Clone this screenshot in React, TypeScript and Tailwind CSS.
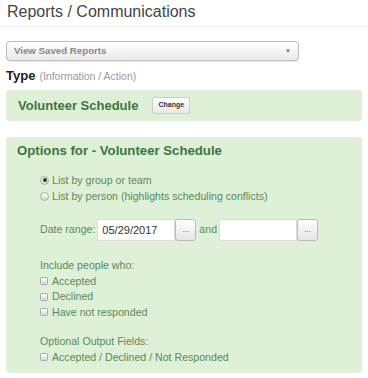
import React from "react";

const Radio = ({ checked }: { checked?: boolean }) => (
  <span className="inline-flex h-[9px] w-[9px] shrink-0 items-center justify-center rounded-full border border-[#a9a9a9] bg-gradient-to-b from-[#fdfdfd] to-[#d8d8d8]">
    {checked && <span className="h-[4px] w-[4px] rounded-full bg-[#333]" />}
  </span>
);

const Check = () => (
  <span className="inline-block h-[8px] w-[8px] shrink-0 rounded-[1.5px] border border-[#a9a9a9] bg-gradient-to-b from-[#fdfdfd] to-[#d8d8d8]" />
);

const Dots = () => (
  <span className="flex h-[22px] w-[21px] items-end justify-center rounded-[3px] border border-[#bbb] bg-gradient-to-b from-white to-[#e6e6e6] pb-[6px] text-[8px] leading-none text-[#444]">
    ...
  </span>
);

export default function App() {
  return (
    <div className="h-[378px] w-[368px] overflow-hidden bg-white font-['Liberation_Sans',Arial,sans-serif] text-[#333]">
      <div className="border-b border-[#eee] px-[7px] pb-[4px] pt-[1px] text-[16px] leading-[21px] text-[#444]">
        Reports / Communications
      </div>
      <div className="px-[6px] pt-[14px]">
        <div className="flex h-[20px] w-[293px] items-center justify-between rounded-[4px] border border-[#bbb] bg-gradient-to-b from-white to-[#eaeaea] pl-[7px] pr-[7px] shadow-[0_1px_1px_rgba(0,0,0,0.08)]">
          <span className="text-[9.7px] font-bold text-[#888]">View Saved Reports</span>
          <span className="text-[6px] text-[#777]">▼</span>
        </div>
        <div className="mt-[6px] flex items-baseline gap-[4px] leading-[18px]">
          <span className="text-[13px] font-bold text-[#222]">Type</span>
          <span className="text-[10.5px] text-[#999]">(Information / Action)</span>
        </div>
        <div className="mt-[5px] flex h-[31px] items-center rounded-[3px] bg-[#dff0d8] pl-[12px]">
          <span className="text-[13px] font-bold text-[#3c763d]">Volunteer Schedule</span>
          <span className="ml-[14px] flex h-[17px] items-center rounded-[2px] border border-[#ccc] bg-gradient-to-b from-white to-[#e8e8e8] px-[5px] text-[7px] font-bold text-[#333]">
            Change
          </span>
        </div>
        <div className="mt-[16px] rounded-[3px] bg-[#dff0d8] pb-[8px] pl-[11px] pt-[4px] text-[10.6px] text-[#5b8a56]">
          <div className="text-[13.2px] font-bold leading-[20px] text-[#3c763d]">
            Options for - Volunteer Schedule
          </div>
          <div className="pl-[23px]">
            <div className="mt-[11px] flex flex-col">
              <label className="flex items-center gap-[3px] leading-[16px]">
                <Radio checked /> List by group or team
              </label>
              <label className="flex items-center gap-[3px] leading-[16px]">
                <Radio /> List by person (highlights scheduling conflicts)
              </label>
            </div>
            <div className="mt-[15px] flex items-center">
              <span>Date range:</span>
              <span className="ml-[2px] flex h-[22px] w-[78px] items-center border border-[#ddd] bg-white pl-[4px] text-[11px] text-[#333]">
                05/29/2017
              </span>
              <Dots />
              <span className="ml-[3px] mr-[2px]">and</span>
              <span className="h-[22px] w-[78px] border border-[#ddd] bg-white" />
              <Dots />
            </div>
            <div className="mt-[17px] flex flex-col leading-[15.5px]">
              <span>Include people who:</span>
              <label className="flex items-center gap-[4px]">
                <Check /> Accepted
              </label>
              <label className="flex items-center gap-[4px]">
                <Check /> Declined
              </label>
              <label className="flex items-center gap-[4px]">
                <Check /> Have not responded
              </label>
            </div>
            <div className="mt-[14px] flex flex-col leading-[15.5px]">
              <span>Optional Output Fields:</span>
              <label className="flex items-center gap-[4px]">
                <Check /> Accepted / Declined / Not Responded
              </label>
            </div>
          </div>
        </div>
      </div>
    </div>
  );
}
